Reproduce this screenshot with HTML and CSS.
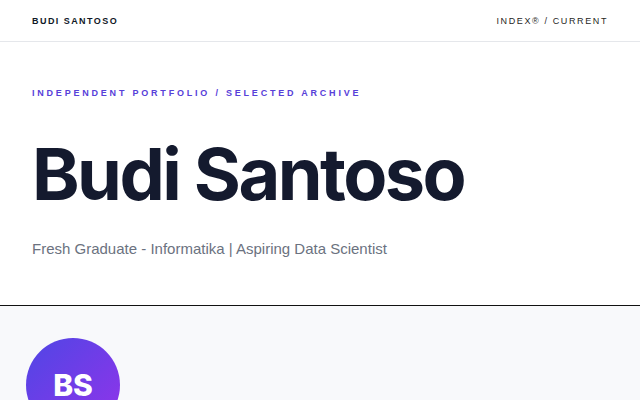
FILE: index.html
```html
<!DOCTYPE html>
<html lang="id">
<head>
<meta charset="utf-8">
<title>Budi Santoso</title>
<link rel="stylesheet" href="styles.css">
</head>
<body>
<header class="topbar">
  <div class="brand">BUDI SANTOSO</div>
  <nav class="nav">INDEX® / CURRENT</nav>
</header>
<section class="hero">
  <p class="eyebrow">INDEPENDENT PORTFOLIO / SELECTED ARCHIVE</p>
  <h1 class="title">Budi Santoso</h1>
  <p class="subtitle">Fresh Graduate - Informatika | Aspiring Data Scientist</p>
</section>
<section class="profile">
  <div class="avatar">BS</div>
</section>
</body>
</html>
```
FILE: styles.css
```css
* { box-sizing: border-box; }
html, body { margin: 0; padding: 0; }
body {
  background: #ffffff;
  font-family: "Liberation Sans", Arial, sans-serif;
  color: #111827;
}
.topbar {
  height: 42px;
  display: flex;
  align-items: center;
  justify-content: space-between;
  padding: 0 32px;
  border-bottom: 1px solid #e5e7eb;
}
.brand {
  font-size: 9px;
  font-weight: 700;
  letter-spacing: 0.16em;
  color: #111827;
}
.nav {
  font-size: 9px;
  letter-spacing: 0.18em;
  color: #1f1f24;
}
.hero {
  padding: 46px 32px 48px;
  border-bottom: 1px solid #111111;
}
.eyebrow {
  margin: 0;
  font-size: 9px;
  font-weight: 700;
  letter-spacing: 0.31em;
  color: #5740d9;
}
.title {
  margin: 40px 0 0;
  font-family: Inter, "Noto Sans", sans-serif;
  font-size: 72px;
  font-weight: 700;
  letter-spacing: -0.035em;
  line-height: 1;
  color: #141a2e;
}
.subtitle {
  margin: 30px 0 0;
  font-size: 15px;
  color: #6b7280;
}
.profile {
  background: #f8f9fb;
  padding: 32px 26px;
  min-height: 96px;
}
.avatar {
  width: 94px;
  height: 94px;
  border-radius: 50%;
  background: linear-gradient(135deg, #4f46e5 0%, #9333ea 100%);
  color: #fff;
  display: flex;
  align-items: center;
  justify-content: center;
  font-family: Inter, sans-serif;
  font-weight: 800;
  font-size: 30px;
}
```
